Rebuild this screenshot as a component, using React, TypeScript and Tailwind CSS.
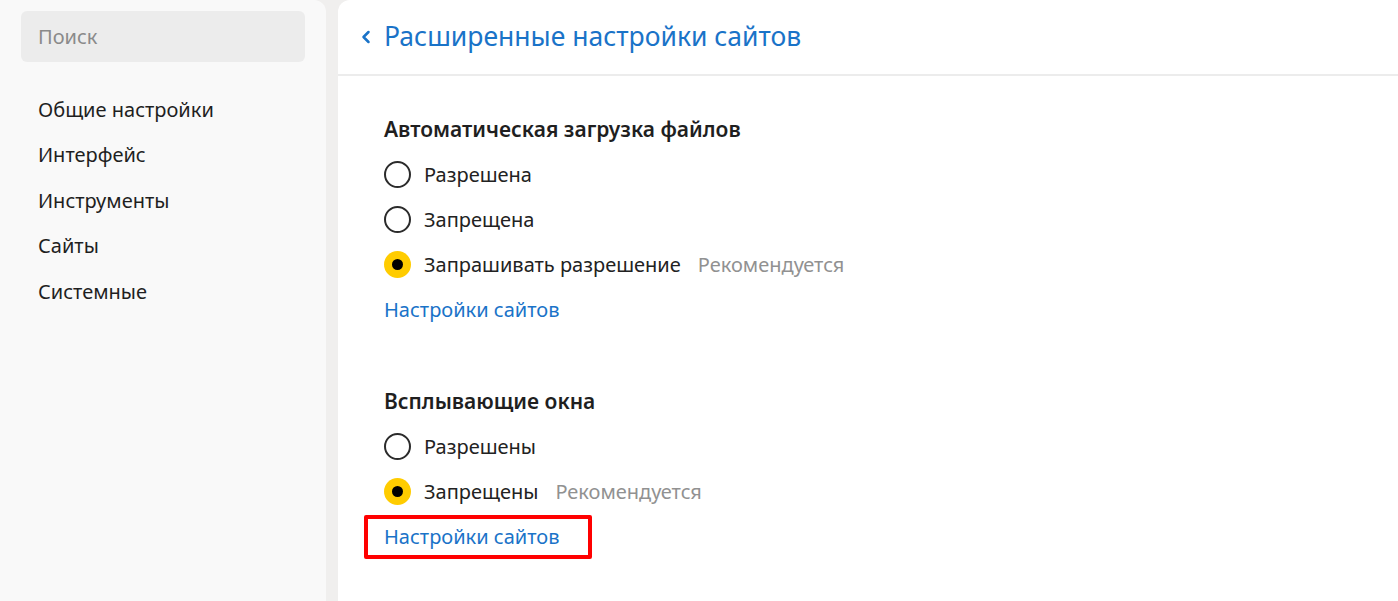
import { ChevronLeft } from 'lucide-react';

const navItems = ['Общие настройки', 'Интерфейс', 'Инструменты', 'Сайты', 'Системные'];

type Option = { label: string; checked?: boolean; note?: string };

function Radio({ checked }: { checked?: boolean }) {
  if (checked) {
    return (
      <span className="w-[27px] h-[27px] rounded-full bg-[#ffcc00] flex items-center justify-center shrink-0">
        <span className="w-[11px] h-[11px] rounded-full bg-black" />
      </span>
    );
  }
  return <span className="w-[27px] h-[27px] rounded-full border-[2.5px] border-[#2b2b2b] shrink-0" />;
}

function Section({ title, options, highlight }: { title: string; options: Option[]; highlight?: boolean }) {
  return (
    <div>
      <div className="h-[45px] flex items-center text-[21px] font-semibold text-[#1f1f1f]">{title}</div>
      {options.map((o) => (
        <div key={o.label} className="h-[45px] flex items-center">
          <Radio checked={o.checked} />
          <span className="ml-[13px] text-[20px] text-[#222]">{o.label}</span>
          {o.note && <span className="ml-[17px] text-[20px] text-[#919191]">{o.note}</span>}
        </div>
      ))}
      <div className="h-[45px] flex items-center">
        {highlight ? (
          <div className="-ml-[20px] border-[4px] border-[#ff0000] rounded-[2px] h-[44px] w-[228px] flex items-center pl-[16px]">
            <span className="text-[20px] text-[#1a73c8]">Настройки сайтов</span>
          </div>
        ) : (
          <span className="text-[20px] text-[#1a73c8]">Настройки сайтов</span>
        )}
      </div>
    </div>
  );
}

export default function App() {
  return (
    <div className="flex w-full h-[601px] bg-[#f0efee] overflow-hidden font-['Noto_Sans',sans-serif]">
      <aside className="w-[326px] shrink-0 bg-[#f9f9f9] rounded-tr-[12px] pt-[11px] px-[21px]">
        <div className="h-[51px] rounded-[6px] bg-[#ececec] flex items-center pl-[17px] text-[20px] text-[#8a8a8a]">
          Поиск
        </div>
        <nav className="mt-[25px]">
          {navItems.map((item) => (
            <div key={item} className="h-[45.5px] flex items-center pl-[17px] text-[20px] text-[#1f1f1f]">
              {item}
            </div>
          ))}
        </nav>
      </aside>

      <main className="flex-1 ml-[12px] bg-white rounded-tl-[12px]">
        <header className="h-[76px] border-b-2 border-[#ececec] flex items-center pl-[18px]">
          <ChevronLeft className="w-[20px] h-[20px] text-[#1a73c8]" strokeWidth={3} />
          <h1 className="ml-[8px] text-[26.5px] text-[#1a73c8]">Расширенные настройки сайтов</h1>
        </header>
        <div className="pl-[46px] pt-[31px]">
          <Section
            title="Автоматическая загрузка файлов"
            options={[
              { label: 'Разрешена' },
              { label: 'Запрещена' },
              { label: 'Запрашивать разрешение', checked: true, note: 'Рекомендуется' },
            ]}
          />
          <div className="h-[47px]" />
          <Section
            title="Всплывающие окна"
            options={[{ label: 'Разрешены' }, { label: 'Запрещены', checked: true, note: 'Рекомендуется' }]}
            highlight
          />
        </div>
      </main>
    </div>
  );
}
